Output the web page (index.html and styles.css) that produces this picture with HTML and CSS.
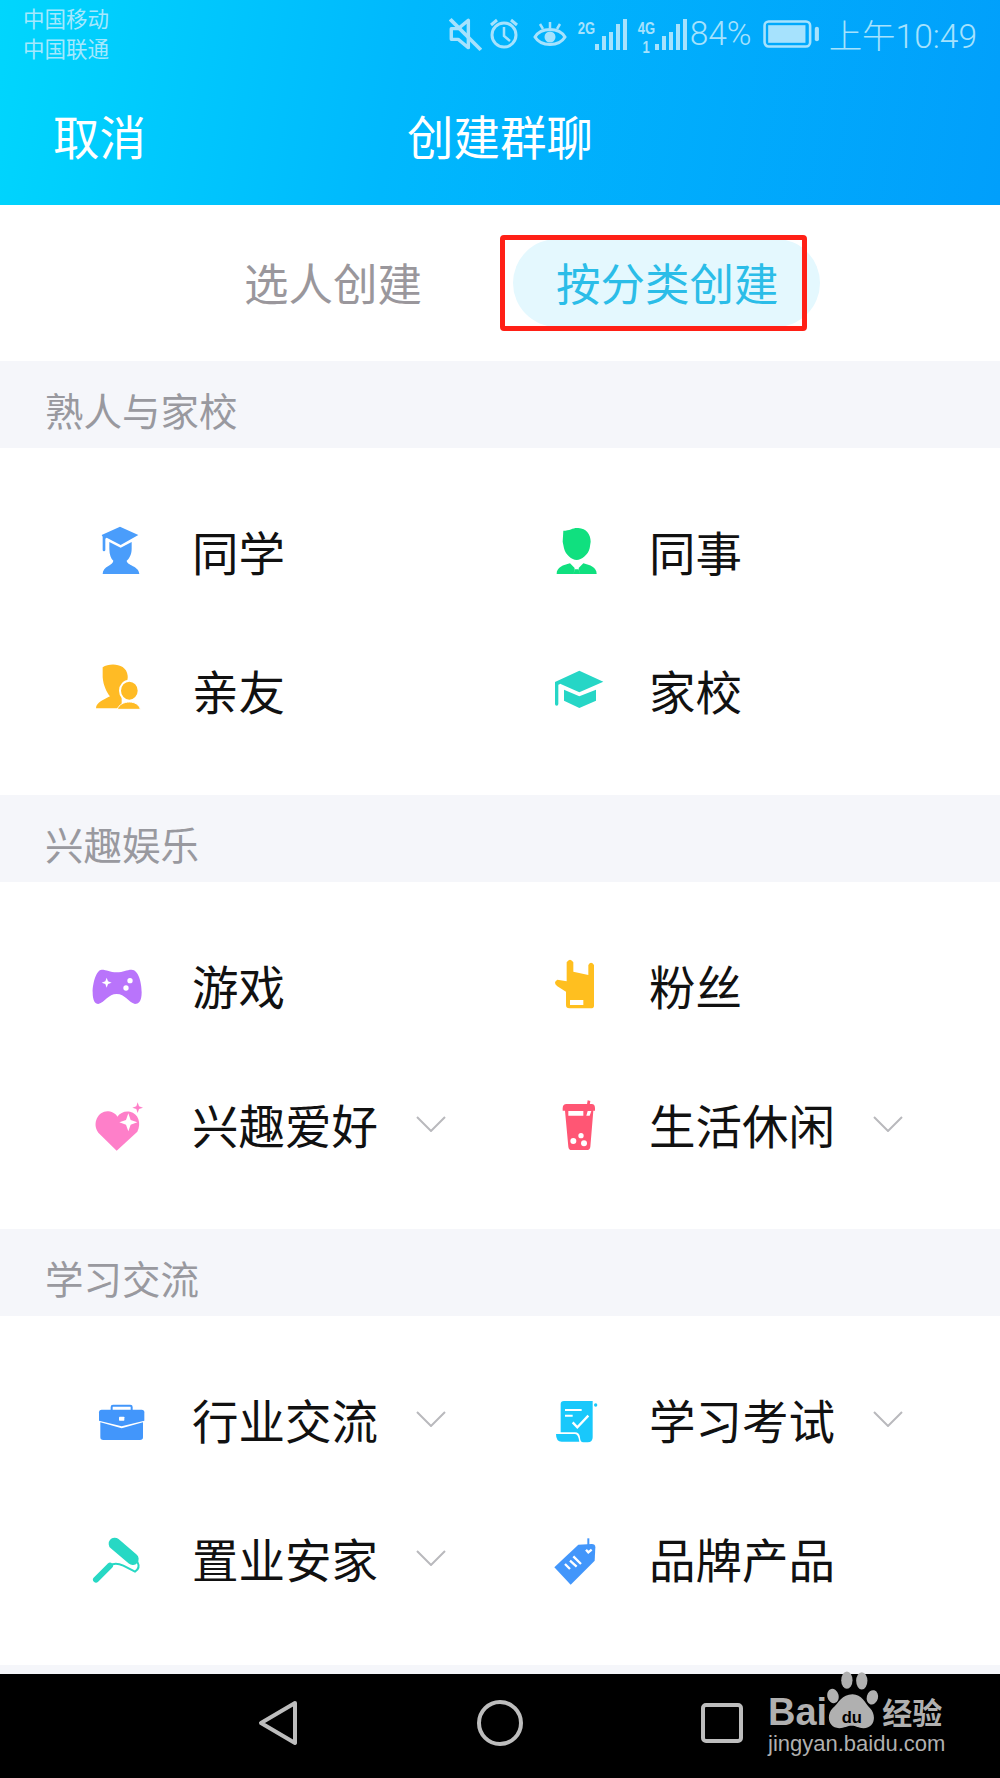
FILE: index.html
```html
<!DOCTYPE html>
<html lang="zh-CN">
<head>
<meta charset="UTF-8">
<meta name="viewport" content="width=device-width, initial-scale=1.0">
<title>创建群聊</title>
<link rel="stylesheet" href="styles.css">
</head>
<body>
<div class="phone">

<header class="top">
    <div class="status">
        <div class="carriers">
            <div>中国移动</div>
            <div>中国联通</div>
        </div>
        <div class="status-right">
            <svg class="st-mute" width="33" height="36" viewBox="0 0 29 34" preserveAspectRatio="none"><path d="M2 12h6l9-8v26l-9-8H2z" fill="none" stroke="#a6e2fd" stroke-width="3" stroke-linejoin="round"/><path d="M1 3l27 29" stroke="#a6e2fd" stroke-width="3.4"/></svg>
            <svg class="st-alarm" width="32" height="34" viewBox="0 0 32 34"><circle cx="16" cy="18" r="12" fill="none" stroke="#a6e2fd" stroke-width="3"/><path d="M16 10v9l6 5" fill="none" stroke="#a6e2fd" stroke-width="2.5"/><path d="M3 8l6-5M29 8l-6-5" stroke="#a6e2fd" stroke-width="3"/></svg>
            <svg class="st-eye" width="34" height="34" viewBox="0 0 34 34"><path d="M2 20c6-10 24-10 30 0-6 10-24 10-30 0z" fill="none" stroke="#a6e2fd" stroke-width="3"/><circle cx="17" cy="20" r="5.5" fill="#a6e2fd"/><path d="M17 5v6M7 7l3 5M27 7l-3 5" stroke="#a6e2fd" stroke-width="2.5"/></svg>
            <div class="signal">
                <span class="net">2G</span>
                <svg width="32" height="32" viewBox="0 0 32 32"><path d="M2 26v6M9 18v14M16 14v18M23 6v26M30 1v31" stroke="#a6e2fd" stroke-width="4"/></svg>
            </div>
            <div class="signal">
                <span class="net">4G<br>1</span>
                <svg width="32" height="32" viewBox="0 0 32 32"><path d="M2 26v6M9 18v14M16 14v18M23 6v26M30 1v31" stroke="#a6e2fd" stroke-width="4"/></svg>
            </div>
            <span class="pct">84%</span>
            <svg class="battery" width="58" height="30" viewBox="0 0 56 28"><rect x="1.5" y="2" width="44" height="24" rx="4" fill="none" stroke="#a6e2fd" stroke-width="2.5"/><rect x="5" y="5.5" width="36" height="17" fill="#a6e2fd"/><rect x="50" y="7" width="4" height="14" rx="2" fill="#a6e2fd"/></svg>
            <span class="clock">上午10:49</span>
        </div>
    </div>
    <div class="nav">
        <span class="cancel">取消</span>
        <span class="title">创建群聊</span>
        <span></span>
    </div>
</header>

<div class="tabs">
    <div class="tab">选人创建</div>
    <div class="tab tab-active">按分类创建<div class="mark"></div></div>
</div>

<div class="sec-head">熟人与家校</div>
<div class="grid">
    <div class="item">
        <svg class="ic" viewBox="60 69 222 180"><g fill="#4a9dfb"><path d="M180 80l55 25-53 30-42-22-4 3v34a4 4 0 0 1-8 0v-40l-3-5z"/><path d="M148 126l34 17 33-17v20c0 18-8 30-15 36 0 14 38 16 38 40H128c0-24 32-26 32-40-7-6-12-18-12-36z"/></g></svg>
        <span class="label">同学</span>
    </div>
    <div class="item">
        <svg class="ic" viewBox="51 69 222 180"><g fill="#10e07f"><path d="M130 92c20 0 30-10 45-8 24 2 37 18 37 41l-3 20c-5 20-24 35-39 35s-33-15-38-35l-4-20z"/><path d="M110 222c0-20 20-27 40-32l14 14-3 18zM230 222c0-20-20-27-40-32l-14 14 3 18zM164 208h12l3 14h-18z"/></g></svg>
        <span class="label">同事</span>
    </div>
    <div class="item">
        <svg class="ic" viewBox="60 489 222 180"><path d="M128 505c22-15 72-12 75 25 2 15-8 30-18 40v58h-77c0-18 27-28 42-36-10-12-20-32-22-57z" fill="#ffbb25"/><ellipse cx="208" cy="575" rx="28" ry="30" fill="#ffbb25" stroke="#fff" stroke-width="6"/><path d="M172 631c4-14 20-22 36-22s30 8 33 22z" fill="#ffbb25" stroke="#fff" stroke-width="3"/></svg>
        <span class="label">亲友</span>
    </div>
    <div class="item">
        <svg class="ic" viewBox="51 489 222 180"><g fill="#26d6c6"><path d="M178 515l72 33-72 32-56-25v-1l-7 3v58a5 5 0 0 1-10 0v-66z"/><path d="M132 572l46 20 50-20v33l-50 22-46-22z"/></g></svg>
        <span class="label">家校</span>
    </div>
</div>

<div class="sec-head">兴趣娱乐</div>
<div class="grid">
    <div class="item">
        <svg class="ic" viewBox="60 54 222 180"><path d="M125 92c15 0 25 8 45 8s30-8 45-8c20 0 30 38 30 68 0 30-10 35-20 35-20-5-30-30-55-30s-35 25-55 30c-10 0-17-10-17-35 0-30 12-68 27-68z" fill="#b974fb"/><path d="M140 116l4 11 11 4-11 4-4 11-4-11-11-4 11-4z" fill="#fff"/><circle cx="210" cy="125" r="8" fill="#fff"/><circle cx="198" cy="147" r="8" fill="#fff"/></svg>
        <span class="label">游戏</span>
    </div>
    <div class="item">
        <svg class="ic" viewBox="51 54 222 180"><path d="M140 70q10-15 20 0v28l45 10V78q8-13 17 0v122q0 8-10 8h-64q-10 0-10-10v-40l-26-16q-14-12 0-20l28 5z" fill="#ffbf1f"/><rect x="150" y="183" width="40" height="15" fill="#fff"/></svg>
        <span class="label">粉丝</span>
    </div>
    <div class="item">
        <svg class="ic" viewBox="60 468 222 180"><path d="M170 632l-55-54c-20-28 0-66 30-64 15 1 25 11 27 16 8-12 23-18 38-15 25 5 35 35 22 60z" fill="#fe7fc9"/><path d="M205 520l7 20 20 7-20 7-7 20-7-20-20-7 20-7z" fill="#fff"/><path d="M233 487l4 12 12 4-12 4-4 12-4-12-12-4 12-4z" fill="#fe7fc9"/></svg>
        <span class="label">兴趣爱好</span>
        <svg class="chev" viewBox="0 0 30 16"><path d="M1 1l14 14L29 1" fill="none" stroke="#b9b9bd" stroke-width="2"/></svg>
    </div>
    <div class="item">
        <svg class="ic" viewBox="51 468 222 180"><g fill="#ff5674"><path d="M128 505q0-13 12-13h75q10 0 10 13v7H128zM135 512h85l-9 108q-1 10-11 10h-45q-9 0-10-10z"/><path d="M199 505l4-24 8 2-4 24z"/></g><path d="M145 513h45v14h-45zM203 513h11l-5 14h-10z" fill="#fff"/><circle cx="160" cy="603" r="9" fill="#fff"/><circle cx="183" cy="587" r="8" fill="#fff"/><circle cx="192" cy="610" r="9" fill="#fff"/></svg>
        <span class="label">生活休闲</span>
        <svg class="chev" viewBox="0 0 30 16"><path d="M1 1l14 14L29 1" fill="none" stroke="#b9b9bd" stroke-width="2"/></svg>
    </div>
</div>

<div class="sec-head">学习交流</div>
<div class="grid">
    <div class="item">
        <svg class="ic" viewBox="60 36 222 180"><rect x="155" y="80" width="60" height="18" rx="4" fill="none" stroke="#4296fb" stroke-width="6"/><g fill="#4296fb"><path d="M117 100q0-8 8-8h120q8 0 8 8v25l-68 17-68-17z"/><path d="M121 130l64 18 64-18v45q0 8-9 8H130q-9 0-9-8z"/></g><rect x="177" y="113" width="16" height="12" rx="2" fill="#fff"/></svg>
        <span class="label">行业交流</span>
        <svg class="chev" viewBox="0 0 30 16"><path d="M1 1l14 14L29 1" fill="none" stroke="#b9b9bd" stroke-width="2"/></svg>
    </div>
    <div class="item">
        <svg class="ic" viewBox="51 36 222 180"><g fill="#19c8fb"><path d="M122 75q0-9 10-9h86v109q0 15-15 15h-13q-10 0-10-15-2-15-15-15h-43z"/><path d="M108 165h57q10 0 13 23h-53q-17 0-17-23z"/><circle cx="227" cy="78" r="5"/></g><path d="M135 90h50v6h-50zM135 107h23v6h-23z" fill="#fff"/><path d="M158 130l14 15 33-35" fill="none" stroke="#fff" stroke-width="7"/></svg>
        <span class="label">学习考试</span>
        <svg class="chev" viewBox="0 0 30 16"><path d="M1 1l14 14L29 1" fill="none" stroke="#b9b9bd" stroke-width="2"/></svg>
    </div>
    <div class="item">
        <svg class="ic" viewBox="60 453 222 180"><path d="M164 494l54 46" stroke="#27d8c4" stroke-width="36" stroke-linecap="round"/><path d="M232 548q10 20-7 30l-35-18q-25-12-40 0" fill="none" stroke="#27d8c4" stroke-width="6"/><path d="M150 560l-42 42" stroke="#27d8c4" stroke-width="18" stroke-linecap="round"/></svg>
        <span class="label">置业安家</span>
        <svg class="chev" viewBox="0 0 30 16"><path d="M1 1l14 14L29 1" fill="none" stroke="#b9b9bd" stroke-width="2"/></svg>
    </div>
    <div class="item">
        <svg class="ic" viewBox="51 453 222 180"><path d="M103 565l72-68 40-2q11 0 11 10l-2 40-72 72z" fill="#4296fb"/><path d="M205 478v20" stroke="#4296fb" stroke-width="6"/><path d="M198 512l7 8 10-8M135 555l15 15M150 545l20 18M160 532l23 23" fill="none" stroke="#fff" stroke-width="7"/></svg>
        <span class="label">品牌产品</span>
    </div>
</div>
<div class="strip"></div>

<footer class="keys">
    <svg class="key" width="40" height="46" viewBox="0 0 40 46"><path d="M37 3L3 23l34 20z" fill="none" stroke="#bdbdbd" stroke-width="4" stroke-linejoin="round"/></svg>
    <svg class="key" width="46" height="46" viewBox="0 0 46 46"><circle cx="23" cy="23" r="21" fill="none" stroke="#bdbdbd" stroke-width="4"/></svg>
    <svg class="key" width="42" height="40" viewBox="0 0 42 40"><rect x="2" y="2" width="38" height="36" rx="3" fill="none" stroke="#bdbdbd" stroke-width="4"/></svg>
    <div class="baidu">
        <div class="baidu-top">
            <span class="bai">Bai</span>
            <svg class="paw" width="53" height="60" viewBox="235 30 160 180"><g fill="#b0b0b0"><ellipse cx="253" cy="108" rx="17" ry="22" transform="rotate(-15 253 108)"/><ellipse cx="295" cy="60" rx="17" ry="26"/><ellipse cx="340" cy="62" rx="17" ry="26"/><ellipse cx="372" cy="112" rx="17" ry="22" transform="rotate(15 372 112)"/><path d="M312 103c28 0 38 27 53 42 20 20 15 60-20 60-15 0-23-7-35-7-14 0-22 7-38 7-34 0-40-40-20-60 18-15 28-42 60-42z"/></g><text x="310" y="190" class="du">du</text></svg>
            <span class="jy">经验</span>
        </div>
        <div class="url">jingyan.baidu.com</div>
    </div>
</footer>

</div>
</body>
</html>
```

FILE: styles.css
```css
/* page */

* {
    box-sizing: border-box;
}
body {
    margin: 0;
    font-family: "Noto Sans CJK SC", "Noto Sans", sans-serif;
    background: #fff;
}
.phone {
    position: relative;
    width: 1000px;
    height: 1778px;
    overflow: hidden;
    display: flex;
    flex-direction: column;
}

/* blue header */

.top {
    height: 205px;
    background: linear-gradient(100deg, #00d6fd 0%, #00b8fd 40%, #019ffb 100%);
    color: #fff;
}
.status {
    height: 68px;
    display: flex;
    justify-content: space-between;
    padding: 3px 23px 0 23px;
}
.carriers {
    font-size: 21.5px;
    line-height: 30px;
    color: #a5e8fd;
}
.status-right {
    display: flex;
    align-items: center;
    height: 61px;
    color: #a6e2fd;
}
.st-alarm {
    margin-left: 6px;
}
.st-eye {
    margin-left: 13px;
}
.signal {
    display: flex;
    align-items: center;
    margin-left: 11px;
}
.net {
    font-family: "Liberation Sans", sans-serif;
    font-size: 13px;
    font-weight: bold;
    line-height: 15px;
    width: 17px;
    align-self: flex-start;
    text-align: center;
    transform: scaleY(1.3);
    transform-origin: top;
}
.pct {
    font-family: Roboto, sans-serif;
    font-size: 33.5px;
    font-weight: 300;
    margin-left: 3px;
}
.battery {
    margin-left: 11px;
}
.clock {
    font-family: Roboto, "Noto Sans CJK SC", sans-serif;
    font-size: 33.5px;
    font-weight: 300;
    margin-left: 8px;
}
.nav {
    display: grid;
    grid-template-columns: 1fr auto 1fr;
    align-items: center;
    padding: 0 53px;
    height: 132px;
    font-size: 46.5px;
}

/* tabs */

.tabs {
    height: 156px;
    display: flex;
    align-items: center;
    gap: 48px;
    padding-left: 201px;
    padding-bottom: 1px;
}
.tab {
    position: relative;
    font-size: 44.5px;
    color: #9a979c;
    padding: 0 43px;
    height: 88px;
    line-height: 86px;
    border-radius: 44px;
}
.tab-active {
    background: #e4f8fe;
    color: #2bbde8;
    padding-right: 41px;
}
.mark {
    position: absolute;
    left: -13px;
    top: -4px;
    width: 307px;
    height: 96px;
    border: 5px solid #ff2016;
    border-radius: 4px;
}

/* category lists */

.sec-head {
    height: 87px;
    line-height: 79px;
    padding: 9px 0 0 45px;
    font-size: 38.5px;
    color: #99999f;
    background: #f5f6fa;
}
.grid {
    display: grid;
    grid-template-columns: 457px 1fr;
    grid-auto-rows: 139px;
    height: 347px;
    padding: 35px 0 0 80px;
}
.item {
    display: flex;
    align-items: center;
}
.ic {
    width: 74px;
    height: 60px;
    margin-right: 38px;
}
.label {
    font-size: 46.5px;
    color: #111;
    padding-bottom: 4px;
}
.chev {
    width: 30px;
    height: 16px;
    margin-left: 38px;
    margin-bottom: 4px;
}
.strip {
    flex: 1;
    margin-top: 2px;
    background: #f5f6fa;
}

/* bottom keys */

.keys {
    position: relative;
    height: 104px;
    flex: none;
    background: #000;
    display: flex;
    align-items: center;
    padding: 0 0 6px 258px;
}
.key:nth-child(1) {
    margin-right: 179px;
}
.key:nth-child(2) {
    margin-right: 178px;
}
.baidu {
    position: absolute;
    left: 768px;
    top: -4px;
    width: 180px;
    color: #b0b0b0;
}
.baidu-top {
    display: flex;
    align-items: flex-end;
    height: 60px;
}
.bai {
    font-family: "Liberation Sans", sans-serif;
    font-size: 38px;
    font-weight: bold;
    line-height: 36px;
}
.paw {
    flex: none;
}
.du {
    font-family: "Liberation Sans", sans-serif;
    font-size: 50px;
    font-weight: bold;
    fill: #000;
    text-anchor: middle;
}
.jy {
    font-size: 30px;
    font-weight: bold;
    line-height: 38px;
    margin-left: 2px;
    white-space: nowrap;
}
.url {
    font-family: "Liberation Sans", sans-serif;
    font-size: 22px;
    line-height: 24px;
    margin-top: 2px;
    white-space: nowrap;
}
```
